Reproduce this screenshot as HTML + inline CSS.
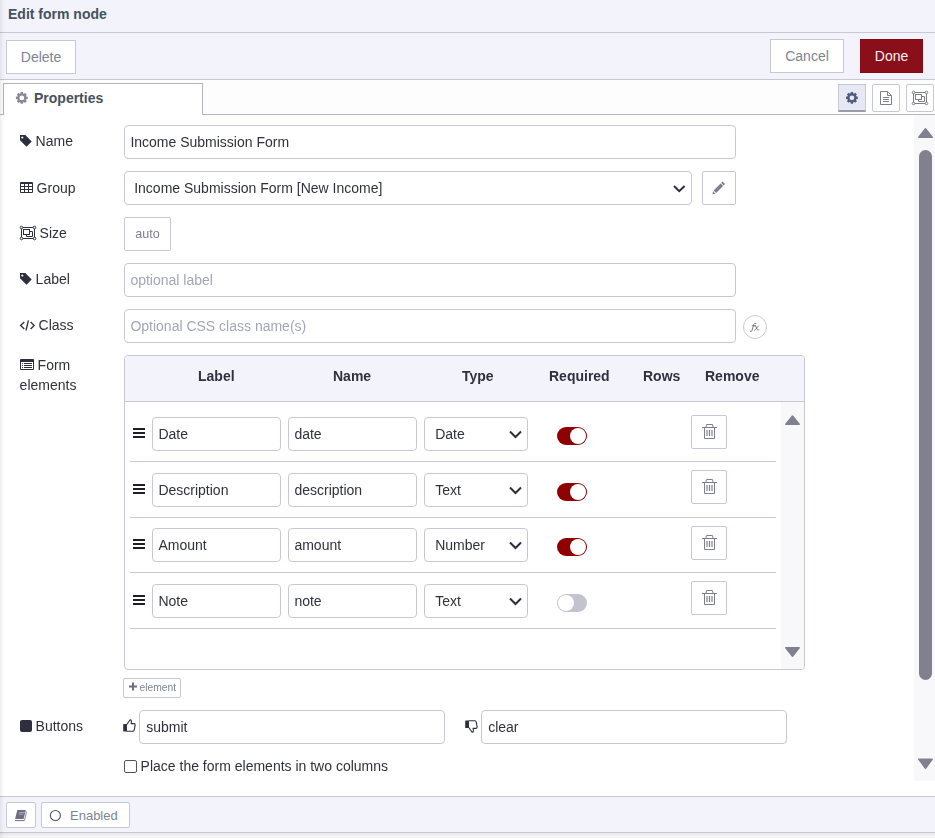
<!DOCTYPE html>
<html><head><meta charset="utf-8">
<style>
*{box-sizing:border-box;margin:0;padding:0}
html,body{width:935px;height:838px;overflow:hidden;background:#fff;font-family:"Liberation Sans",sans-serif;font-size:14px;color:#333}
div,span{position:absolute;white-space:nowrap}
span{line-height:normal}
#hdr{left:0;top:0;width:935px;height:33px;background:#f3f3fc;border-bottom:1px solid #c8c8d4}
#hdr .t{left:8px;top:6px;font-weight:bold;font-size:14px;color:#44525e}
#tb{left:0;top:33px;width:935px;height:47px;background:#f3f3fc;border-bottom:1px solid #c8c8d4}
.btn{background:#fff;border:1px solid #c8c8d4;border-radius:2px;color:#7c8595;font-size:14px;text-align:center}
#tabs{left:0;top:80px;width:935px;height:35px;background:#fdfdfd;border-bottom:1px solid #b4b4c2}
#tab1{left:3px;top:83px;width:200px;height:32px;background:#fff;border:1px solid #b4b4c2;border-bottom:none}
#ftr{left:0;top:796px;width:935px;height:37px;background:#f3f3fc;border-top:1px solid #c8c8d4;border-bottom:1px solid #c8c8d4}
.lbl{color:#30313c;font-size:14px}
.inp{background:#fff;border:1px solid #c8c8d4;border-radius:4px;font-size:14px;color:#30313c}
.inp span{left:5.4px;top:8px}
.ph{color:#a4a6b6}
.hd{font-weight:bold;color:#30313c}
.sep{height:1px;background:#c8c8d4}
svg{position:absolute;left:0;top:0}
</style></head><body>
<div id="hdr"><div class="t">Edit form node</div></div>
<div id="tb">
  <div class="btn" style="left:6px;top:7px;width:70px;height:34px;line-height:32px;border-radius:0">Delete</div>
  <div class="btn" style="left:770px;top:6px;width:74px;height:34px;line-height:32px;border-radius:0">Cancel</div>
  <div class="btn" style="left:860px;top:6px;width:63px;height:34px;line-height:32px;background:#8b0f1a;border-color:#850b14;color:#f0f0f0;border-radius:0">Done</div>
</div>
<div id="tabs"></div>
<div id="tab1"><span style="left:30px;top:6px;font-weight:bold;color:#44525e">Properties</span></div>
<div class="btn" style="left:838px;top:84px;width:28px;height:28px;background:#e6e8f4;border-bottom:2px solid #9c9cae;border-radius:0"></div>
<div class="btn" style="left:872px;top:84px;width:28px;height:28px"></div>
<div class="btn" style="left:906px;top:84px;width:28px;height:28px"></div>

<div id="cl" style="left:0;top:0;width:935px;height:838px;will-change:transform">
<!-- scrollbar -->
<div style="left:914px;top:115px;width:21px;height:666px;background:#f8f8fb"></div>
<div style="left:919px;top:150px;width:13px;height:530px;background:#80808e;border-radius:7px"></div>

<!-- content -->
<div class="lbl" style="left:35.6px;top:133px">Name</div>
<div class="inp" style="left:124px;top:125px;width:612px;height:34px"><span>Income Submission Form</span></div>

<div class="lbl" style="left:36.6px;top:180px">Group</div>
<div class="inp" style="left:124px;top:171px;width:568px;height:34px"><span style="left:9.2px">Income Submission Form [New Income]</span></div>
<div class="btn" style="left:702px;top:171px;width:34px;height:34px;border-radius:2px"></div>

<div class="lbl" style="left:39.6px;top:225px">Size</div>
<div class="btn" style="left:124px;top:217px;width:47px;height:34px;line-height:32px;font-size:12.6px;border-radius:2px;color:#7c7f90">auto</div>

<div class="lbl" style="left:35.6px;top:271px">Label</div>
<div class="inp" style="left:124px;top:263px;width:612px;height:34px"><span class="ph">optional label</span></div>

<div class="lbl" style="left:38.6px;top:317px">Class</div>
<div class="inp" style="left:124px;top:309px;width:612px;height:34px"><span class="ph">Optional CSS class name(s)</span></div>
<div class="btn" style="left:743px;top:315px;width:24px;height:24px;border-radius:50%"></div>

<div class="lbl" style="left:37.6px;top:357px">Form</div>
<div class="lbl" style="left:19.6px;top:377px">elements</div>

<!-- table -->
<div style="left:124px;top:355px;width:681px;height:315px;border:1px solid #c8c8d4;border-radius:4px;background:#fff;overflow:hidden">
  <div style="left:0;top:0;width:679px;height:46px;background:#f3f3fc;border-bottom:1px solid #c8c8d4"></div>
  <div style="left:656px;top:46px;width:23px;height:267px;background:#f8f8fb"></div>
</div>
<div class="hd" style="left:198px;top:368px">Label</div>
<div class="hd" style="left:333px;top:368px">Name</div>
<div class="hd" style="left:462px;top:368px">Type</div>
<div class="hd" style="left:549px;top:368px">Required</div>
<div class="hd" style="left:643px;top:368px">Rows</div>
<div class="hd" style="left:705px;top:368px">Remove</div>

<!-- rows -->
<div class="inp" style="left:152px;top:417px;width:129px;height:34px"><span>Date</span></div>
<div class="inp" style="left:288px;top:417px;width:129px;height:34px"><span>date</span></div>
<div class="inp" style="left:424px;top:417px;width:104px;height:34px"><span style="left:10.2px">Date</span></div>
<div class="btn" style="left:691px;top:415px;width:36px;height:34px;border-radius:2px"></div>
<div class="sep" style="left:130px;top:461px;width:646px"></div>

<div class="inp" style="left:152px;top:473px;width:129px;height:34px"><span>Description</span></div>
<div class="inp" style="left:288px;top:473px;width:129px;height:34px"><span>description</span></div>
<div class="inp" style="left:424px;top:473px;width:104px;height:34px"><span style="left:10.2px">Text</span></div>
<div class="btn" style="left:691px;top:470px;width:36px;height:34px;border-radius:2px"></div>
<div class="sep" style="left:130px;top:517px;width:646px"></div>

<div class="inp" style="left:152px;top:528px;width:129px;height:34px"><span>Amount</span></div>
<div class="inp" style="left:288px;top:528px;width:129px;height:34px"><span>amount</span></div>
<div class="inp" style="left:424px;top:528px;width:104px;height:34px"><span style="left:10.2px">Number</span></div>
<div class="btn" style="left:691px;top:526px;width:36px;height:34px;border-radius:2px"></div>
<div class="sep" style="left:130px;top:572px;width:646px"></div>

<div class="inp" style="left:152px;top:584px;width:129px;height:34px"><span>Note</span></div>
<div class="inp" style="left:288px;top:584px;width:129px;height:34px"><span>note</span></div>
<div class="inp" style="left:424px;top:584px;width:104px;height:34px"><span style="left:10.2px">Text</span></div>
<div class="btn" style="left:691px;top:581px;width:36px;height:34px;border-radius:2px"></div>
<div class="sep" style="left:130px;top:628px;width:646px"></div>

<!-- toggles -->
<div style="left:557px;top:427px;width:30px;height:18px;border-radius:9px;background:#8f0000"></div>
<div style="left:557px;top:483px;width:30px;height:18px;border-radius:9px;background:#8f0000"></div>
<div style="left:557px;top:538px;width:30px;height:18px;border-radius:9px;background:#8f0000"></div>
<div style="left:557px;top:594px;width:30px;height:18px;border-radius:9px;background:#c3c3cf"></div>
<div style="left:570px;top:428px;width:16px;height:16px;border-radius:50%;background:#fff"></div>
<div style="left:570px;top:484px;width:16px;height:16px;border-radius:50%;background:#fff"></div>
<div style="left:570px;top:539px;width:16px;height:16px;border-radius:50%;background:#fff"></div>
<div style="left:558px;top:595px;width:16px;height:16px;border-radius:50%;background:#fff"></div>

<div class="btn" style="left:123px;top:678px;width:58px;height:20px;font-size:10.3px;line-height:18px;border-radius:2px"><span style="left:15.5px;top:2.5px">element</span></div>

<div class="lbl" style="left:35.6px;top:718px">Buttons</div>
<div class="inp" style="left:139px;top:710px;width:306px;height:34px"><span style="left:6.2px">submit</span></div>
<div class="inp" style="left:481px;top:710px;width:306px;height:34px"><span style="left:6.2px">clear</span></div>

<div style="left:124px;top:760px;width:13px;height:13px;border:1px solid #555;border-radius:2px"></div>
<div class="lbl" style="left:140.6px;top:758px">Place the form elements in two columns</div>

</div>
<div style="left:0;top:833px;width:935px;height:5px;background:linear-gradient(#e6e6e8,#f3f3f3 60%)"></div>
<div id="ftr">
  <div class="btn" style="left:6px;top:5px;width:30px;height:26px"></div>
  <div class="btn" style="left:41px;top:5px;width:89px;height:26px;line-height:24px"><span style="left:28px;top:5px;font-size:13px">Enabled</span></div>
</div>

<div style="left:0;top:0;width:5px;height:838px;background:linear-gradient(to right,rgba(0,0,0,.065),rgba(0,0,0,.03) 40%,rgba(0,0,0,0))"></div>
<svg width="935" height="838" viewBox="0 0 935 838">
  <!-- tag Name -->
  <g fill="#2e2f3c">
    <path d="M20,135 H25.3 L31.7,141.5 L26.5,146.8 L20,140.3 Z M22.3,136.4 a1.1,1.1 0 1 0 0.01,0 Z" fill-rule="evenodd"/>
    <path d="M20,273 H25.3 L31.7,279.5 L26.5,284.8 L20,278.3 Z M22.3,274.4 a1.1,1.1 0 1 0 0.01,0 Z" fill-rule="evenodd"/>
  </g>
  <!-- table icon Group -->
  <g>
    <rect x="20" y="182" width="13" height="11" rx="1" fill="#2e2f3c"/>
    <g fill="#fff">
      <rect x="21" y="184" width="3" height="2"/><rect x="25" y="184" width="3" height="2"/><rect x="29" y="184" width="3" height="2"/>
      <rect x="21" y="187" width="3" height="2"/><rect x="25" y="187" width="3" height="2"/><rect x="29" y="187" width="3" height="2"/>
      <rect x="21" y="190" width="3" height="2"/><rect x="25" y="190" width="3" height="2"/><rect x="29" y="190" width="3" height="2"/>
    </g>
  </g>
  <!-- object group Size -->
  <g fill="none" stroke="#2e2f3c" stroke-width="1">
    <path d="M21.5,227.5 H34.5 M21.5,238.5 H34.5 M21.5,227.5 V238.5 M34.5,227.5 V238.5"/>
    <rect x="23.5" y="229.5" width="6" height="5"/>
    <path d="M29.5,231.5 H32.5 V236.5 H26.5 V234.5"/>
    <circle cx="21.5" cy="227.5" r="1.3" fill="#fff"/><circle cx="34.5" cy="227.5" r="1.3" fill="#fff"/>
    <circle cx="21.5" cy="238.5" r="1.3" fill="#fff"/><circle cx="34.5" cy="238.5" r="1.3" fill="#fff"/>
  </g>
  <!-- code Class -->
  <g fill="none" stroke="#2e2f3c" stroke-width="1.3">
    <path d="M24.3,322 L20.6,325.5 L24.3,329"/>
    <path d="M30.6,322 L34.2,325.5 L30.6,329"/>
    <path d="M28.4,320.3 L26,330.5"/>
  </g>
  <!-- list-alt Form elements -->
  <g>
    <rect x="20" y="359" width="14" height="11" rx="1" fill="#2e2f3c"/>
    <rect x="21" y="362" width="12" height="7" fill="#fff"/>
    <g fill="#2e2f3c">
      <circle cx="22.5" cy="363.5" r="0.6"/><circle cx="22.5" cy="365.5" r="0.6"/><circle cx="22.5" cy="367.5" r="0.6"/>
      <rect x="24" y="363" width="8" height="1"/><rect x="24" y="365" width="8" height="1"/><rect x="24" y="367" width="8" height="1"/>
    </g>
  </g>
  <!-- square Buttons -->
  <rect x="20" y="720" width="12" height="12" rx="2" fill="#2e2f3c"/>

  <!-- gear in tab -->
  <g fill="#85889a" transform="translate(21.8,97.9)">
    <path id="gear" d="M-1.45,-4.26 L-1.15,-5.89 L1.15,-5.89 L1.45,-4.26 L1.99,-4.04 L3.35,-4.98 L4.98,-3.35 L4.04,-1.99 L4.26,-1.45 L5.89,-1.15 L5.89,1.15 L4.26,1.45 L4.04,1.99 L4.98,3.35 L3.35,4.98 L1.99,4.04 L1.45,4.26 L1.15,5.89 L-1.15,5.89 L-1.45,4.26 L-1.99,4.04 L-3.35,4.98 L-4.98,3.35 L-4.04,1.99 L-4.26,1.45 L-5.89,1.15 L-5.89,-1.15 L-4.26,-1.45 L-4.04,-1.99 L-4.98,-3.35 L-3.35,-4.98 L-1.99,-4.04 Z M2.4,0 A2.4,2.4 0 1 0 -2.4,0 A2.4,2.4 0 1 0 2.4,0 Z" fill-rule="evenodd"/>
  </g>
  <g fill="#4f5b7a" transform="translate(851.9,97.8)">
    <use href="#gear"/>
  </g>
  <!-- file-text-o -->
  <g fill="none" stroke="#7c7e90" stroke-width="1">
    <path d="M880.5,91.5 H887.5 L891.5,95.5 V104.5 H880.5 Z"/>
    <path d="M887.5,91.5 V95.5 H891.5"/>
    <path d="M883,97.5 H889 M883,99.5 H889 M883,101.5 H889"/>
  </g>
  <!-- object group tab -->
  <g fill="none" stroke="#7c7e90" stroke-width="1">
    <path d="M913.5,92.5 H926.5 M913.5,103.5 H926.5 M913.5,92.5 V103.5 M926.5,92.5 V103.5"/>
    <rect x="915.5" y="94.5" width="6" height="5"/>
    <path d="M921.5,96.5 H924.5 V101.5 H918.5 V99.5"/>
    <circle cx="913.5" cy="92.5" r="1.3" fill="#fff"/><circle cx="926.5" cy="92.5" r="1.3" fill="#fff"/>
    <circle cx="913.5" cy="103.5" r="1.3" fill="#fff"/><circle cx="926.5" cy="103.5" r="1.3" fill="#fff"/>
  </g>
  <!-- pencil -->
  <g transform="translate(-0.4,1.3)">
  <g fill="#7c7e90">
    <path d="M721.6,181.6 L722.9,180.3 L725.4,182.8 L724.1,184.1 Z"/>
    <path d="M714,189.3 L721,182.3 L723.5,184.8 L716.5,191.8 Z"/>
    <path d="M713.6,190 L716,192.3 L712.8,193.2 Z"/>
  </g>
  <path d="M714.4,190.6 L715.3,191.5" stroke="#fff" stroke-width="0.8"/>
  </g>
  <!-- fx -->
  <g fill="none" stroke="#707082" stroke-width="0.9" stroke-linecap="round">
    <path d="M750.3,331.3 Q751.3,332.2 752,330.8 L753.6,324.6 Q754.2,322.9 755.8,323.4"/>
    <path d="M752.2,325.7 H755.6"/>
    <path d="M754.7,325.9 Q755.6,325.6 756.2,327 L757.3,329.6 Q757.8,330.6 758.8,330"/>
    <path d="M758.6,325.9 L754.6,330.4"/>
  </g>
  <!-- chevrons -->
  <g fill="none" stroke="#2d2d3a" stroke-width="2">
    <path d="M674,186 L679.2,191.2 L684.6,186"/>
    <path d="M510,431.5 L515.5,437 L521,431.5"/>
    <path d="M510,487.5 L515.5,493 L521,487.5"/>
    <path d="M510,542.5 L515.5,548 L521,542.5"/>
    <path d="M510,598.5 L515.5,604 L521,598.5"/>
  </g>
  <!-- bars -->
  <g fill="#1e1e2c">
    <rect x="133" y="428" width="12" height="2"/><rect x="133" y="432" width="12" height="2"/><rect x="133" y="436" width="12" height="2"/>
    <rect x="133" y="484" width="12" height="2"/><rect x="133" y="488" width="12" height="2"/><rect x="133" y="492" width="12" height="2"/>
    <rect x="133" y="539" width="12" height="2"/><rect x="133" y="543" width="12" height="2"/><rect x="133" y="547" width="12" height="2"/>
    <rect x="133" y="595" width="12" height="2"/><rect x="133" y="599" width="12" height="2"/><rect x="133" y="603" width="12" height="2"/>
  </g>
  <!-- trash -->
  <g id="trash" fill="none" stroke="#7c7e90" stroke-width="1">
    <path d="M702,427.5 H717"/>
    <path d="M706,427 L706.5,424.5 H712.5 L713,427"/>
    <path d="M704.5,427.5 V438.5 H714.5 V427.5"/>
    <path d="M707,430 V436 M709.5,430 V436 M712,430 V436" stroke-width="1.2"/>
  </g>
  <use href="#trash" y="55"/>
  <use href="#trash" y="111"/>
  <use href="#trash" y="166"/>
  <!-- table scroll arrows -->
  <path d="M792.5,416 L799.2,424.3 H785.8 Z" fill="#80808e" stroke="#80808e" stroke-width="1.5" stroke-linejoin="round"/>
  <path d="M785.8,647.7 H799.2 L792.5,656.2 Z" fill="#80808e" stroke="#80808e" stroke-width="1.5" stroke-linejoin="round"/>
  <!-- main scroll arrows -->
  <path d="M925.5,128.8 L932.2,137.3 H918.8 Z" fill="#80808e" stroke="#80808e" stroke-width="1.5" stroke-linejoin="round"/>
  <path d="M918.8,759.2 H932.2 L925.5,768.2 Z" fill="#80808e" stroke="#80808e" stroke-width="1.5" stroke-linejoin="round"/>
  <!-- plus -->
  <path d="M129,686.5 H137 M133,682.5 V690.5" stroke="#6d7080" stroke-width="2"/>
  <!-- thumbs -->
  <g id="thup" fill="none" stroke="#2e2f3c" stroke-width="1.1" stroke-linejoin="round">
    <rect x="123.8" y="724.6" width="2.6" height="6.4" fill="#2e2f3c"/>
    <path d="M126.6,724.8 L129.2,721 Q130,719.4 131,720 Q131.9,720.8 131.1,723.6 H134.2 Q135.4,723.9 135.1,725.3 L134.2,730.1 Q133.9,731.2 132.8,731.2 H126.6"/>
  </g>
  <use href="#thup" transform="translate(342,1452) scale(1,-1)"/>
  <!-- book -->
  <path d="M17.3,810 H25.8 L23.6,819 H15.1 Z" fill="#6e6e80"/>
  <path d="M19.2,812.5 H24.6 M18.8,814.2 H23.4" stroke="#a8a8b8" stroke-width="1"/>
  <path d="M15.3,819.6 H23.8" stroke="#fff" stroke-width="1"/>
  <path d="M15,820.6 H24.2" stroke="#6e6e80" stroke-width="1"/>
  <path d="M26.6,811.5 L24.4,820.6" stroke="#8a8a9c" stroke-width="1"/>
  <!-- circle -->
  <circle cx="55.4" cy="815.5" r="5" fill="none" stroke="#4a5568" stroke-width="1.1"/>
</svg>
</body></html>
